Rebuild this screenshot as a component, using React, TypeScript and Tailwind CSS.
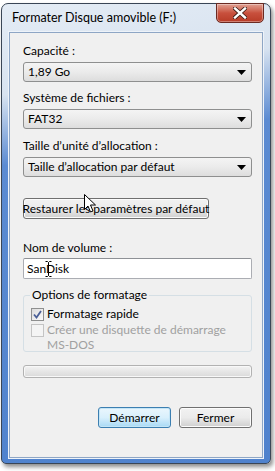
import React from "react";

const font = { fontFamily: 'Lato, "Noto Sans", sans-serif' };

const Arrow = () => (
  <svg width="9" height="5" viewBox="0 0 9 5" className="shrink-0">
    <path d="M0 0h9L4.5 5z" fill="#000" />
  </svg>
);

const Combo = ({ value }: { value: string }) => (
  <div className="flex h-[20px] items-center justify-between rounded-[3px] border border-[#8e8f8f] bg-gradient-to-b from-[#f4f4f4] via-[#ebebeb] to-[#dddddd] pl-[4px] pr-[5px] text-[12px] leading-none">
    <span>{value}</span>
    <Arrow />
  </div>
);

const Btn = ({ label, primary, className }: { label: string; primary?: boolean; className?: string }) => (
  <div
    className={
      "flex h-[21px] items-center justify-center whitespace-nowrap rounded-[3px] border text-[12px] leading-none " +
      (primary
        ? "border-[#3c7fb1] bg-gradient-to-b from-[#eaf6fd] via-[#d9f0fc] to-[#a7d9f5] shadow-[inset_0_0_0_1px_#c4e5f6]"
        : "border-[#707070] bg-gradient-to-b from-[#f2f2f2] via-[#ebebeb] to-[#cfcfcf] shadow-[inset_0_0_0_1px_#fcfcfc]") +
      " " +
      (className || "")
    }
  >
    {label}
  </div>
);

export default function App() {
  return (
    <div className="relative h-[471px] w-[275px] overflow-hidden bg-white text-black" style={font}>
      {/* window */}
      <div className="ml-[1px] mt-[3px] flex h-[461px] w-[270px] flex-col rounded-t-[7px] rounded-b-[5px] border border-[#3a4656] bg-[linear-gradient(170deg,#e4ecf5_0%,#d8e3f0_18%,#5b8bd2_32%,#4f82cd_100%)] px-[7px] pb-[5px] shadow-[2px_3px_4px_rgba(0,0,0,0.45)]">
        {/* title bar */}
        <div className="relative flex h-[28px] shrink-0 items-center pl-[3px] text-[12.5px]">
          <span>Formater Disque amovible (F:)</span>
          <div className="absolute right-[-1px] top-[-1px] flex h-[20px] w-[48px] items-center justify-center rounded-b-[5px] border border-[#6b2a22] bg-gradient-to-b from-[#e0a193] via-[#c8503d] to-[#b73b26] shadow-[inset_0_0_0_1px_rgba(255,255,255,0.35)]">
            <svg width="14" height="12" viewBox="0 0 14 12">
              <path d="M2 1.5l10 9M12 1.5l-10 9" stroke="#3a1a14" strokeWidth="4" strokeLinecap="square" />
              <path d="M2 1.5l10 9M12 1.5l-10 9" stroke="#fff" strokeWidth="2.4" strokeLinecap="square" />
            </svg>
          </div>
        </div>
        {/* client area */}
        <div className="flex flex-1 flex-col border border-[#8ea6c5] bg-[#f0f0f0] pl-[13px] pr-[10px] pt-[12px] text-[12px] shadow-[0_0_0_1px_#eef3f9]">
          <div className="leading-none">Capacité :</div>
          <div className="mt-[5px]">
            <Combo value="1,89 Go" />
          </div>
          <div className="mt-[10px] leading-none">Système de fichiers :</div>
          <div className="mt-[5px]">
            <Combo value="FAT32" />
          </div>
          <div className="mt-[11px] leading-none">Taille d’unité d’allocation :</div>
          <div className="mt-[5px]">
            <Combo value="Taille d’allocation par défaut" />
          </div>
          <div className="mt-[21px] flex">
            <Btn label="Restaurer les paramètres par défaut" className="w-[186px]" />
          </div>
          <div className="mt-[23px] leading-none">Nom de volume :</div>
          <div className="relative mt-[4px] flex h-[21px] items-center rounded-[2px] border border-[#abadb3] border-t-[#8e9196] bg-white pl-[3px] leading-none">
            SanDisk
            <svg className="absolute left-[21px] top-[2px]" width="7" height="16" viewBox="0 0 7 16">
              <path d="M0.5 0.5h2l1 1 1-1h2M3.5 1.5v13M0.5 15.5h2l1-1 1 1h2" stroke="#000" fill="none" strokeWidth="1" />
            </svg>
          </div>
          {/* group box */}
          <div className="relative mt-[16px] h-[57px] rounded-[3px] border border-[#d5dfe5] px-[7px] pt-[10px]">
            <div className="absolute left-[6px] top-[-9px] bg-[#f0f0f0] px-[2px] leading-[16px]">Options de formatage</div>
            <div className="flex items-center gap-[3px]">
              <div className="flex h-[13px] w-[13px] items-center justify-center border border-[#8e8f8f] bg-gradient-to-br from-[#dcdcdc] to-[#fbfbfb]">
                <svg width="9" height="9" viewBox="0 0 9 9">
                  <path d="M1 4.5l2.5 3L8 1" stroke="#4a5f97" strokeWidth="1.8" fill="none" />
                </svg>
              </div>
              <span className="leading-[16px]">Formatage rapide</span>
            </div>
            <div className="flex items-start gap-[3px] text-[#a0a0a0]">
              <div className="mt-[2px] h-[13px] w-[13px] shrink-0 border border-[#c4c4c4] bg-[#f4f4f4]" />
              <span className="leading-[15px]">
                Créer une disquette de démarrage
                <br />
                MS-DOS
              </span>
            </div>
          </div>
          {/* progress */}
          <div className="mt-[13px] h-[13px] rounded-[3px] border border-[#b2b2b2] bg-gradient-to-b from-[#f3f3f3] via-[#e6e6e6] to-[#dadada] shadow-[inset_0_0_0_1px_#f8f8f8]" />
          <div className="mt-[29px] flex justify-end gap-[8px]">
            <Btn label="Démarrer" primary className="w-[73px]" />
            <Btn label="Fermer" className="w-[73px]" />
          </div>
        </div>
      </div>
      {/* mouse pointer */}
      <svg className="absolute left-[84px] top-[194px]" width="13" height="20" viewBox="0 0 13 20">
        <path d="M0.5 0.5v15l3.5-3.5 2.5 6 2.5-1-2.5-6h5z" fill="#fff" stroke="#000" strokeWidth="1" />
      </svg>
    </div>
  );
}
